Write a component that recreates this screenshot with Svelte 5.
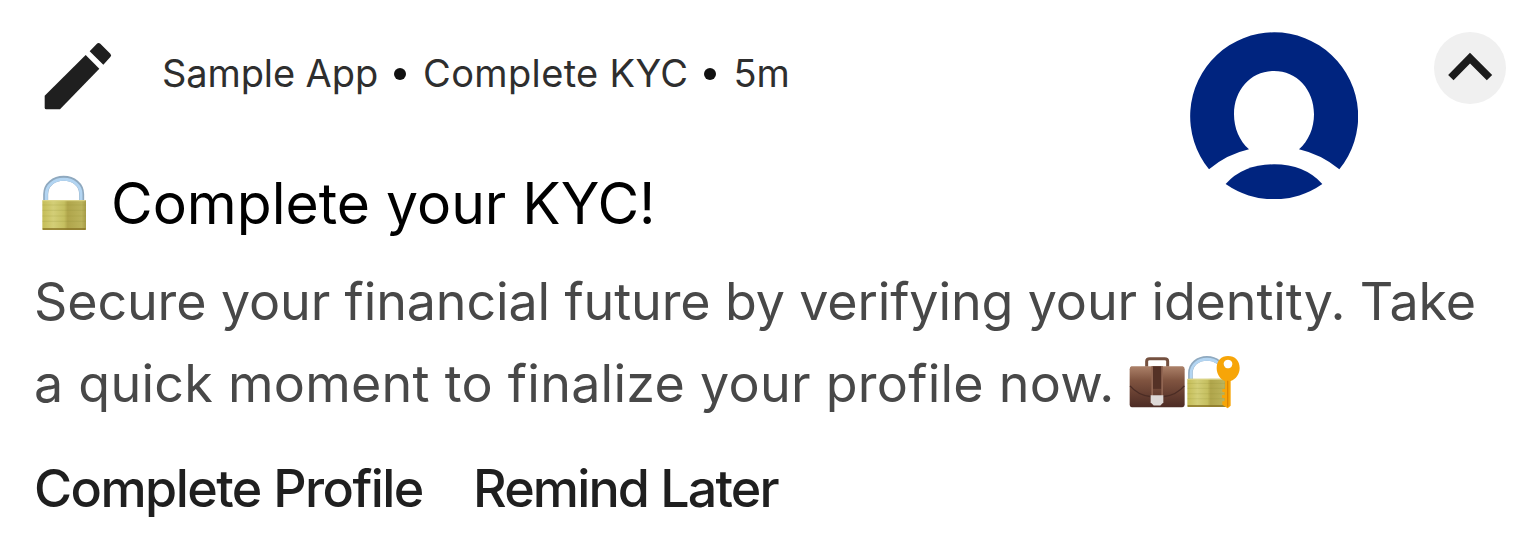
<script lang="ts">
    const meta = ['Sample App', 'Complete KYC', '5m'];
    const bodyLines = [
        'Secure your financial future by verifying your identity. Take',
        'a quick moment to finalize your profile now.'
    ];

    let expanded = $state(true);
</script>

{#snippet padlock()}
    <path d="M47 100V82C47 52 72 34 101 34s54 18 54 48v18" fill="none" stroke="#8fa9bf" stroke-width="15" />
    <path d="M49 100V82C49 54 73 37 101 37s52 17 52 45v18" fill="none" stroke="#b3d5f2" stroke-width="9" />
    <rect x="37" y="99" width="131" height="90" rx="3" fill="url(#brass)" />
    <path d="M37 114h131M37 130h131M37 147h131M37 163h131" stroke="#8e8b35" stroke-opacity=".2" stroke-width="3" />
    <path d="M38 101h128" stroke="#ded78c" stroke-width="3" />
    <path d="M38 186h129" stroke="#897326" stroke-width="5" />
{/snippet}

<svg class="defs" aria-hidden="true">
    <defs>
        <linearGradient id="brass">
            <stop offset="0" stop-color="#c5bd57" />
            <stop offset=".25" stop-color="#d3ce77" />
            <stop offset=".5" stop-color="#c5bf60" />
            <stop offset=".58" stop-color="#b0a54b" />
            <stop offset=".9" stop-color="#bbb35b" />
            <stop offset="1" stop-color="#a69b46" />
        </linearGradient>
        <linearGradient id="leather" x2="0" y2="1">
            <stop offset="0" stop-color="#ac8169" />
            <stop offset=".35" stop-color="#805440" />
            <stop offset=".7" stop-color="#643d30" />
            <stop offset="1" stop-color="#4d2c25" />
        </linearGradient>
    </defs>
</svg>

<article class="notification">
    <div class="top">
        <div class="main">
            <div class="meta">
                <svg class="pencil" viewBox="42 34 204 204">
                    <path d="M44 195V231Q44 236 49 236H90L208 114L167 73Z" />
                    <path d="M179 62L200 40Q205 35 211 39L241 69Q246 74 241 79L220 102Z" />
                </svg>
                <div class="meta-text">
                    {#each meta as item, i}
                        {#if i > 0}<span class="dot"></span>{/if}
                        <span class="item-{i}">{item}</span>
                    {/each}
                </div>
            </div>
            <h1 class="title">
                <svg class="lock" viewBox="30 24 144 171">{@render padlock()}</svg>
                <span>Complete your KYC!</span>
            </h1>
        </div>

        <svg class="avatar" viewBox="30 35 504 504">
            <path d="M87 450A252 252 0 1 1 478 450Q423 405 357 390C386 365 402 326 402 285C402 210 350 155 282 155S162 210 162 285C162 326 178 365 207 390Q140 405 87 450Z" />
            <path d="M137 494Q190 435 282 435T427 494A252 252 0 0 1 137 494Z" />
        </svg>

        <button class="toggle" aria-label="Toggle" aria-expanded={expanded} onclick={() => (expanded = !expanded)}>
            <svg viewBox="29 23 218 218">
                <path d="M80 161L138 102L197 161" fill="none" stroke="#1c1c1c" stroke-width="23" />
            </svg>
        </button>
    </div>

    <p class="body">
        <span class="line-0">{bodyLines[0]}</span>
        <span class="line-1">{bodyLines[1]}</span>
        <span class="emoji">
            <svg class="briefcase" viewBox="39 35 168 155">
                <path d="M92 67V50Q92 43 101 43H146Q155 43 155 50V67" fill="none" stroke="#74503f" stroke-width="9" />
                <path d="M46 65H200Q206 66 206 74V181Q206 188 199 188H47Q41 188 41 181V74Q41 66 46 65Z" fill="url(#leather)" />
                <path d="M42 124Q65 151 102 156H145Q182 151 205 124" fill="none" stroke="#4b2c25" stroke-width="4" />
                <rect x="109" y="65" width="28" height="68" fill="#543126" />
                <rect x="106" y="65" width="5" height="90" fill="#916653" />
                <rect x="136" y="65" width="5" height="90" fill="#916653" />
                <path d="M104 152H142V174L133 183H113L104 174Z" fill="#ded9d7" />
            </svg>
            <svg class="lock-key" viewBox="210 25 162 162">
                <g transform="translate(180 3) scale(.92 .94)">{@render padlock()}</g>
                <g fill="#f7a508">
                    <path fill-rule="evenodd" d="M336 28C316 28 302 42 302 64C302 82 312 98 327 103V127H319V136H326V145H318V154H326V164H319V174L335 185L344 177V103C360 98 371 82 371 64C371 42 357 28 336 28ZM336 39A13 13 0 1 1 335.9 39Z" />
                </g>
                <path d="M335 102V180" stroke="#df8500" stroke-width="4" />
            </svg>
        </span>
    </p>

    <div class="actions">
        <button class="action profile">Complete Profile</button>
        <button class="action remind">Remind Later</button>
    </div>
</article>

<style>
    :global(body) { background: #fff; }
    .notification {
        box-sizing: border-box;
        width: 1536px;
        height: 552px;
        padding: 32px 30px 0 34px;
        background: #fff;
        font-family: Inter, "Liberation Sans", sans-serif;
        overflow: hidden;
    }
    .defs { display: block; width: 0; height: 0; }
    .top { display: flex; align-items: flex-start; height: 229px; }
    .main { flex: 1; }
    .meta { display: flex; align-items: flex-start; padding: 10px 0 0 10px; }
    .pencil { width: 68px; height: 68px; fill: #1f1f1f; }
    .meta-text {
        display: flex;
        align-items: center;
        height: 62px;
        margin-left: 50px;
        font-size: 38px;
        color: #2e2e2e;
        white-space: nowrap;
    }
    .item-0 { letter-spacing: -0.1px; }
    .item-1 { letter-spacing: 0.35px; }
    .dot {
        width: 12px;
        height: 12px;
        margin: 2px 17px 0 16px;
        border-radius: 50%;
        background: #111;
    }
    .title {
        display: flex;
        align-items: center;
        height: 70px;
        margin: 58px 0 0;
        font-size: 57px;
        font-weight: 400;
        color: #000;
        white-space: nowrap;
    }
    .lock { width: 50px; height: 57px; margin: 0 22px 0 5px; }
    .avatar { width: 168px; height: 168px; margin-top: -1px; fill: #00247f; }
    .toggle {
        width: 72px;
        height: 72px;
        margin-left: 76px;
        padding: 0;
        border: 0;
        border-radius: 50%;
        background: #f0f0f0;
    }
    .toggle svg { display: block; width: 72px; height: 72px; }
    .body {
        display: flex;
        flex-wrap: wrap;
        margin: 0;
        font-size: 52px;
        line-height: 82px;
        color: #484848;
        white-space: nowrap;
    }
    .line-0 { width: 100%; letter-spacing: -0.13px; }
    .line-1 { letter-spacing: 0.26px; }
    .emoji { display: flex; align-items: center; height: 78px; margin-left: 14px; }
    .briefcase { width: 56px; height: 52px; }
    .lock-key { width: 54px; height: 54px; margin-left: 1px; }
    .actions { display: flex; margin-top: 32px; }
    .action {
        padding: 0;
        border: 0;
        background: none;
        font: 500 52px/64px Inter, "Liberation Sans", sans-serif;
        color: #1f1f1f;
        text-align: left;
        white-space: nowrap;
    }
    .profile { width: 439px; letter-spacing: -1.55px; }
    .remind { letter-spacing: -1.85px; }
</style>
